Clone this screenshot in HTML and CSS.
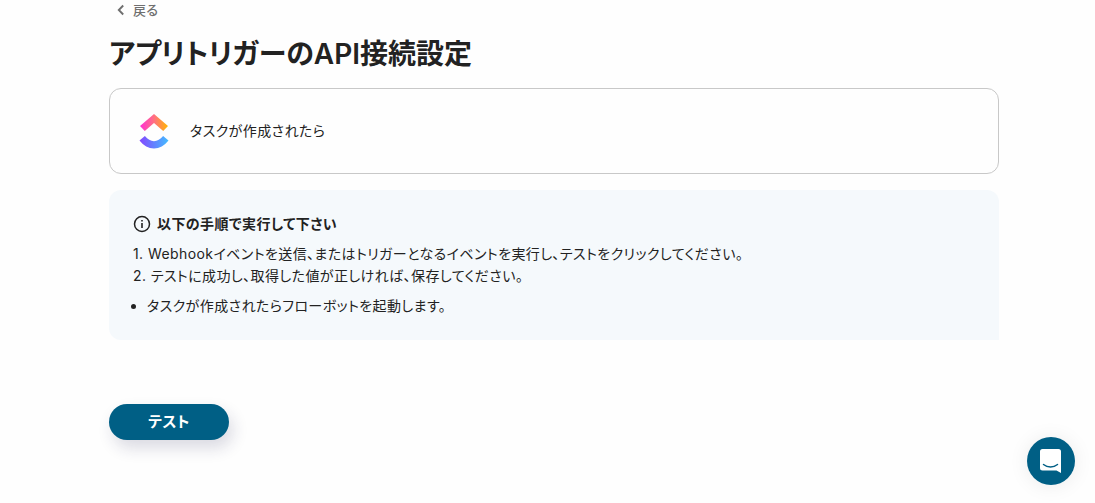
FILE: index.html
```html
<!DOCTYPE html>
<html lang="ja">
<head>
<meta charset="utf-8">
<meta name="viewport" content="width=device-width, initial-scale=1">
<title>アプリトリガーのAPI接続設定</title>
<link rel="stylesheet" href="styles.css">
</head>
<body>
<main class="page">
  <a class="back" href="#">
    <svg class="back-icon" viewBox="0 0 8 12" aria-hidden="true"><path d="M6.200 1.500 1.800 6l4.400 4.500" fill="none" stroke="currentColor" stroke-width="1.900"/></svg>
    <span>戻る</span>
  </a>
  <h1 class="title">アプリトリガーのAPI接続設定</h1>
  <section class="trigger">
    <svg class="trigger-logo" viewBox="0 0 30 36" aria-hidden="true">
      <defs>
        <linearGradient id="warm" x1="0" x2="1" y1="0" y2="0"><stop offset="0" stop-color="#ff2fd5"/><stop offset=".5" stop-color="#ff7082"/><stop offset="1" stop-color="#ffb700"/></linearGradient>
        <linearGradient id="cool" x1="0" x2="1" y1="0" y2="0"><stop offset="0" stop-color="#8447ff"/><stop offset="1" stop-color="#43bcff"/></linearGradient>
      </defs>
      <path d="M15 1 1 12.900l4.800 5.200L15 10l9.200 8.100 4.800-5.200z" fill="url(#warm)"/>
      <path d="m.5 27.500 5.400-4.400c2.900 3.500 5.700 5.100 9.100 5.100s6.200-1.600 9.100-5.100l5.400 4.400c-4.200 5.300-9 8-14.500 8s-10.300-2.700-14.500-8z" fill="url(#cool)"/>
    </svg>
    <p class="trigger-name">タスクが作成されたら</p>
  </section>
  <section class="guide">
    <h2 class="guide-title">
      <svg class="guide-icon" viewBox="0 0 18 18" aria-hidden="true"><circle cx="9" cy="9" r="7.500" fill="none" stroke="currentColor" stroke-width="1.500"/><path d="M8.200 8h1.600v5H8.200zM8.200 5h1.600v1.600H8.200z" fill="currentColor"/></svg>
      <span>以下の手順で実行して下さい</span>
    </h2>
    <p class="guide-step">1. Webhookイベントを送信、またはトリガーとなるイベントを実行し、テストをクリックしてください。</p>
    <p class="guide-step">2. テストに成功し、取得した値が正しければ、保存してください。</p>
    <ul class="guide-notes">
      <li>タスクが作成されたらフローボットを起動します。</li>
    </ul>
  </section>
  <button class="test" type="button">テスト</button>
</main>
<button class="chat" type="button" aria-label="チャットを開く">
  <svg class="chat-icon" viewBox="0 0 22 24" aria-hidden="true"><path d="M2.500 0h16A2.500 2.500 0 0 1 21 2.500V24l-4.500-2.500h-14A2.500 2.500 0 0 1 0 19V2.500A2.500 2.500 0 0 1 2.500 0z" fill="#fff"/><path d="M3.500 15.500c4.200 3.400 9.800 3.400 14 0" fill="none" stroke="#005f85" stroke-width="1.500" stroke-linecap="round"/></svg>
</button>
</body>
</html>
```
FILE: styles.css
```css
* { box-sizing: border-box; }

body {
  margin: 0;
  background: #fefefe;
  color: #222222;
  font-family: Inter, "Noto Sans CJK JP", sans-serif;
  font-size: 14px;
  line-height: 22px;
  font-feature-settings: "palt";
  letter-spacing: 0.03em;
}

h1, h2, p, ul { margin: 0; }

button { border: 0; font: inherit; font-feature-settings: inherit; letter-spacing: inherit; cursor: pointer; }

.page {
  display: flex;
  flex-direction: column;
  padding: 0 96px 40px 109px;
}

.back {
  display: flex;
  align-items: center;
  align-self: flex-start;
  gap: 8px;
  padding-left: 8px;
  color: #6f6f6f;
  font-size: 13px;
  font-weight: 500;
  line-height: 20px;
  text-decoration: none;
}

.back-icon { width: 8px; height: 12px; }

.title {
  margin-top: 14px;
  font-size: 28px;
  font-weight: 600;
  line-height: 40px;
  letter-spacing: normal;
}

.trigger {
  display: flex;
  align-items: center;
  gap: 21px;
  margin-top: 14px;
  padding: 24px 29px;
  border: 1px solid #c8c8c8;
  border-radius: 12px;
}

.trigger-logo { width: 30px; height: 36px; }

.guide {
  margin-top: 16px;
  padding: 23px 24px;
  border-radius: 12px 12px 0 12px;
  background: #f5f9fc;
}

.guide-title {
  display: flex;
  align-items: center;
  gap: 6px;
  margin-bottom: 8px;
  font-size: 14px;
  font-weight: 600;
}

.guide-icon { width: 18px; height: 18px; }

.guide-notes { margin-top: 8px; padding-left: 14px; }

.test {
  align-self: flex-start;
  width: 120px;
  height: 36px;
  margin-top: 64px;
  border-radius: 18px;
  background: #005f85;
  box-shadow: 4px 8px 16px rgba(30, 30, 80, 0.16);
  color: #ffffff;
  font-size: 15px;
  font-weight: 600;
}

.chat {
  position: fixed;
  right: 20px;
  bottom: 18px;
  display: flex;
  align-items: center;
  justify-content: center;
  width: 48px;
  height: 48px;
  padding: 0;
  border-radius: 50%;
  background: #005f85;
  box-shadow: 0 1px 20px rgba(0, 0, 0, 0.08);
}

.chat-icon { width: 22px; height: 24px; }
```
